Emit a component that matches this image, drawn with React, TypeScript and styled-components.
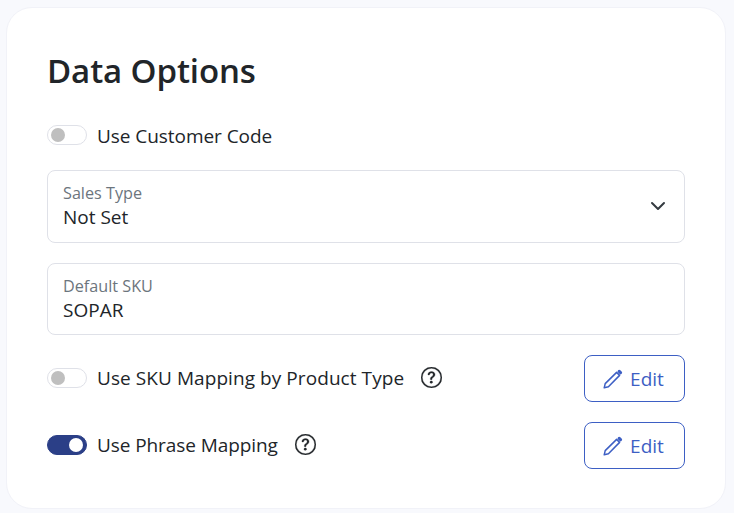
import styled, { createGlobalStyle } from 'styled-components';
import { BsQuestionCircle } from 'react-icons/bs';
import type { FC, ReactNode } from 'react';

const GlobalStyle = createGlobalStyle`
  html, body {
    margin: 0;
    height: 100%;
    background: #f8f9fd;
  }
  body {
    font-family: "Open Sans", "Noto Sans", "Liberation Sans", sans-serif;
    color: #212529;
  }
`;

const Page = styled.div`
  box-sizing: border-box;
  width: 734px;
  height: 513px;
  padding: 7px 8px 4px 6px;
`;

const Card = styled.section`
  box-sizing: border-box;
  height: 100%;
  padding: 41px 40px 0;
  background: #fff;
  border: 1px solid #f1f2f8;
  border-radius: 26px;
`;

const Title = styled.h2`
  margin: 0 0 30px;
  font-size: 33px;
  line-height: 44px;
  font-weight: 600;
  letter-spacing: -0.1px;
  color: #212529;
`;

const Track = styled.span<{ $on?: boolean }>`
  box-sizing: border-box;
  flex: none;
  display: flex;
  align-items: center;
  justify-content: ${(props) => (props.$on ? 'flex-end' : 'flex-start')};
  width: 40px;
  height: 20px;
  padding: 0 3px;
  border-radius: 10px;
  border: 1px solid ${(props) => (props.$on ? '#2b3f87' : '#dfe1e8')};
  background: ${(props) => (props.$on ? '#2b3f87' : '#fff')};
`;

const Knob = styled.span<{ $on?: boolean }>`
  width: 14px;
  height: 14px;
  border-radius: 50%;
  background: ${(props) => (props.$on ? '#fff' : '#bfbfbf')};
`;

const SwitchLabel = styled.span<{ $tracking?: number }>`
  margin-left: 10px;
  font-size: 19px;
  line-height: 24px;
  letter-spacing: ${(props) => props.$tracking ?? 0}px;
  color: #212529;
`;

const CustomerLabel = styled(SwitchLabel)`
  padding-top: 2px;
`;

const SwitchRow = styled.div`
  display: flex;
  align-items: center;
  height: 24px;
  margin-bottom: 23px;
`;

const OptionRow = styled.div<{ $gap: number }>`
  display: flex;
  align-items: center;
  justify-content: space-between;
  height: 47px;
  margin-top: ${(props) => props.$gap}px;
`;

const OptionMain = styled.div`
  display: flex;
  align-items: center;
  padding-bottom: 2px;
`;

const HelpIcon = styled(BsQuestionCircle)`
  margin-left: 17px;
  width: 21px;
  height: 21px;
  color: #212529;
  stroke: currentColor;
  stroke-width: 0.25;
`;

const Field = styled.div<{ $height: number }>`
  box-sizing: border-box;
  position: relative;
  display: flex;
  flex-direction: column;
  justify-content: flex-start;
  height: ${(props) => props.$height}px;
  margin-bottom: 20px;
  padding: 12px 15px 0;
  border: 1px solid #dfe1e8;
  border-radius: 8px;
`;

const FieldLabel = styled.span`
  font-size: 16.2px;
  line-height: 20px;
  color: #6c757d;
`;

const FieldValue = styled.span`
  margin-top: 1px;
  font-size: 19px;
  line-height: 27px;
  color: #212529;
`;

const Chevron = styled.svg`
  position: absolute;
  right: 18px;
  top: 27px;
  width: 16px;
  height: 16px;
  fill: none;
  stroke: #343a40;
  stroke-width: 2;
  stroke-linecap: round;
  stroke-linejoin: round;
`;

const EditButton = styled.button`
  box-sizing: border-box;
  display: flex;
  align-items: center;
  justify-content: center;
  gap: 7px;
  width: 101px;
  height: 47px;
  padding: 0 2px 0 0;
  border: 1px solid #3d5fc4;
  border-radius: 8px;
  background: #fff;
  color: #3d5fc4;
  font-family: inherit;
  font-size: 19px;
  line-height: 24px;
`;

const PencilIcon = styled.svg`
  width: 20px;
  height: 20px;
  fill: none;
  stroke: currentColor;
`;

const PencilBody = styled.path`
  stroke-width: 1.5;
  stroke-linejoin: round;
`;

const PencilCap = styled.path`
  stroke-width: 3.2;
  stroke-linecap: round;
`;

interface OptionProps {
  on?: boolean;
  tracking?: number;
  gap: number;
  children: ReactNode;
}

const Option: FC<OptionProps> = ({ on, tracking, gap, children }) => (
  <OptionRow $gap={gap}>
    <OptionMain>
      <Track $on={on}>
        <Knob $on={on} />
      </Track>
      <SwitchLabel $tracking={tracking}>{children}</SwitchLabel>
      <HelpIcon />
    </OptionMain>
    <EditButton type="button">
      <PencilIcon viewBox="0 0 20 20">
        <PencilBody d="M1.2 18.8 L2.2 14.6 L13.6 3.4 L16.6 6.4 L5.4 17.8 Z" />
        <PencilCap d="M16.2 2.4 L17.5 3.7" />
      </PencilIcon>
      Edit
    </EditButton>
  </OptionRow>
);

export default function App() {
  return (
    <Page>
      <GlobalStyle />
      <Card>
        <Title>Data Options</Title>
        <SwitchRow>
          <Track>
            <Knob />
          </Track>
          <CustomerLabel $tracking={-0.05}>Use Customer Code</CustomerLabel>
        </SwitchRow>
        <Field $height={73}>
          <FieldLabel>Sales Type</FieldLabel>
          <FieldValue>Not Set</FieldValue>
          <Chevron viewBox="0 0 16 16">
            <path d="M2 5l6 6 6-6" />
          </Chevron>
        </Field>
        <Field $height={72}>
          <FieldLabel>Default SKU</FieldLabel>
          <FieldValue>SOPAR</FieldValue>
        </Field>
        <Option tracking={0.07} gap={0}>
          Use SKU Mapping by Product Type
        </Option>
        <Option on tracking={-0.08} gap={20}>
          Use Phrase Mapping
        </Option>
      </Card>
    </Page>
  );
}
